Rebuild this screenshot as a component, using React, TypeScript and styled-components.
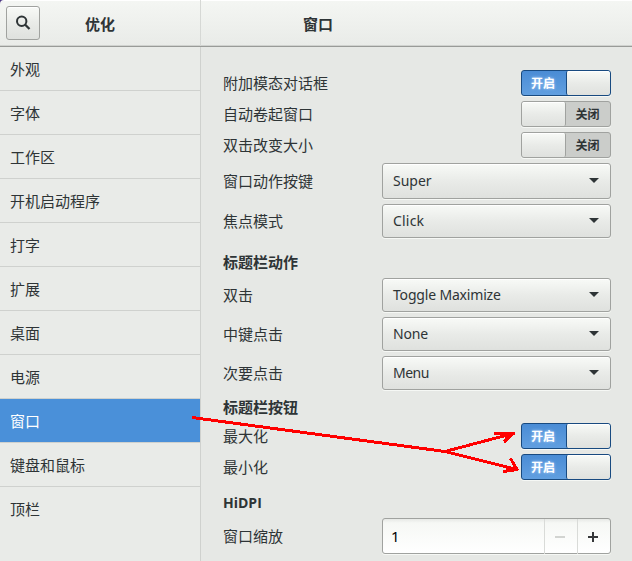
import React from 'react';
import styled, { createGlobalStyle, css } from 'styled-components';

const GlobalStyle = createGlobalStyle`
  * { box-sizing: border-box; }
  body {
    margin: 0;
    overflow: hidden;
    background: #e8eae7;
    color: #2e3436;
    font-family: "Noto Sans CJK SC", sans-serif;
    font-size: 15px;
  }
`;

const raised = css`
  background: linear-gradient(#f8faf7, #e9ebe8 50%, #dfe1de);
  box-shadow: inset 0 1px #fff;
`;

const Window = styled.div`
  position: relative;
  display: flex;
  flex-direction: column;
  width: 632px;
  height: 561px;
  overflow: hidden;
`;

const HeaderBar = styled.header`
  display: grid;
  grid-template-columns: 201px 1fr;
  height: 47px;
  flex: none;
  background: linear-gradient(#fff 1px, #f4f6f3 1px, #e9ebe8);
  border-bottom: 1px solid #999b98;
  box-shadow: inset 0 -1px #d0d2cf;
`;

const HeaderSide = styled.div`
  display: grid;
  grid-template-columns: 34px 1fr 34px;
  align-items: center;
  padding: 0 6px;
  border-right: 1px solid #d6d8d5;
`;

const HeaderMain = styled.div`
  display: flex;
  align-items: center;
  padding-left: 102px;
`;

const Title = styled.h1`
  margin: 0;
  padding-top: 2px;
  font-size: 15px;
  line-height: 24px;
  font-weight: 700;
  text-align: center;
`;

const SearchButton = styled.button`
  ${raised}
  display: grid;
  place-items: center;
  width: 34px;
  height: 34px;
  padding: 0;
  border: 1px solid #a0a29f;
  border-radius: 3px;
  color: #2e3436;
`;

const Corner = styled.svg`
  position: absolute;
  top: 0;
  left: 0;
`;

const Body = styled.div`
  display: grid;
  grid-template-columns: 201px 1fr;
  flex: 1;
`;

const Sidebar = styled.nav`
  background: #e9ebe8;
  border-right: 1px solid #cfd1ce;
`;

const NavItem = styled.div<{ $active: boolean; $last: boolean }>`
  display: flex;
  align-items: center;
  height: 44px;
  padding: 0 10px;
  border-bottom: 1px solid ${p => (p.$last ? 'transparent' : '#cfd1ce')};
  color: ${p => (p.$active ? '#fff' : '#2e3436')};
  background: ${p => (p.$active ? '#4a90d9' : 'transparent')};
  background-clip: padding-box;
`;

const Panel = styled.main`
  display: flex;
  flex-direction: column;
  gap: 5px;
  padding: 23px 21px 0 22px;
  background: #e6e8e5;
`;

const Row = styled.div<{ $height: number }>`
  display: flex;
  align-items: center;
  justify-content: space-between;
  height: ${p => p.$height}px;
  flex: none;
`;

const Label = styled.span`
  line-height: 22px;
  padding-bottom: 1px;
`;

const SectionTitle = styled.h2<{ $before: number; $latin?: boolean }>`
  flex: none;
  height: 20px;
  margin: ${p => p.$before}px 0 0;
  font-size: ${p => (p.$latin ? 14 : 15)}px;
  font-family: ${p => (p.$latin ? '"Open Sans"' : '"Noto Sans CJK SC"')}, sans-serif;
  line-height: ${p => (p.$latin ? 20 : 18)}px;
  font-weight: 700;
`;

const SwitchTrack = styled.div<{ $on: boolean }>`
  display: flex;
  flex-direction: ${p => (p.$on ? 'row' : 'row-reverse')};
  width: 90px;
  height: 26px;
  border: 1px solid ${p => (p.$on ? '#184a80' : '#a0a29f')};
  border-radius: 3px;
  overflow: hidden;
  background: ${p => (p.$on ? 'linear-gradient(#4a8cd5, #619fe0)' : '#cbcdca')};
  box-shadow: 0 1px #f6f8f5;
`;

const SwitchText = styled.span<{ $on: boolean }>`
  flex: 1;
  padding-right: ${p => (p.$on ? 2 : 1)}px;
  text-align: center;
  font-size: 12px;
  font-weight: 700;
  line-height: ${p => (p.$on ? 24 : 23)}px;
  color: ${p => (p.$on ? '#fff' : '#2e3436')};
  text-shadow: ${p => (p.$on ? '0 0 3px #b8d8ff' : 'none')};
`;

const SwitchThumb = styled.span<{ $on: boolean }>`
  ${raised}
  width: 44px;
  border-radius: 2px;
  ${p => (p.$on ? 'border-left: 1px solid #184a80;' : 'border-right: 1px solid #a0a29f;')}
`;

const SelectBox = styled.div`
  ${raised}
  display: flex;
  align-items: center;
  justify-content: space-between;
  width: 229px;
  height: 100%;
  padding: 0 11px 0 10px;
  border: 1px solid #a0a29f;
  border-radius: 3px;
  box-shadow: inset 0 1px #fff, 0 1px #f6f8f5;
  font-family: "Noto Sans", sans-serif;
  font-size: 14px;
`;

const SelectValue = styled.span<{ $spacing: number }>`
  padding-bottom: 2px;
  letter-spacing: ${p => p.$spacing}px;
`;

const SpinBox = styled.div`
  display: grid;
  grid-template-columns: 1fr 33px 33px;
  width: 229px;
  height: 36px;
  border: 1px solid #a0a29f;
  border-radius: 3px;
  background: linear-gradient(#e7e9e6, #f6f8f5 4px, #fff);
  box-shadow: 0 1px #f6f8f5;
`;

const SpinValue = styled.span`
  padding-left: 8px;
  font-family: "Noto Sans", sans-serif;
  font-size: 15px;
  line-height: 35px;
  color: #000;
`;

const SpinButton = styled.span<{ $disabled?: boolean }>`
  display: grid;
  place-items: center;
  padding-right: 2px;
  border-left: 1px solid #d9dbd8;
  color: ${p => (p.$disabled ? '#d2d4d1' : '#36383a')};
`;

const Annotation = styled.svg`
  position: absolute;
  inset: 0;
  pointer-events: none;
`;

const SearchIcon = () => (
  <svg width="16" height="16" viewBox="0 0 16 16" fill="none" stroke="currentColor">
    <circle cx="6.7" cy="6.2" r="4.7" strokeWidth="2" />
    <path d="M10 9.500L14.500 14" strokeWidth="2.3" />
  </svg>
);

const CaretIcon = () => (
  <svg width="10" height="8" viewBox="0 0 10 8">
    <path d="M0 1h10L5 6z" fill="#2e3436" />
  </svg>
);

const Toggle = ({ label, on }: { label: string; on: boolean }) => (
  <Row $height={26}>
    <Label>{label}</Label>
    <SwitchTrack $on={on}>
      <SwitchText $on={on}>{on ? '开启' : '关闭'}</SwitchText>
      <SwitchThumb $on={on} />
    </SwitchTrack>
  </Row>
);

const Choice = ({ label, value, height = 34, spacing = 0 }: { label: string; value: string; height?: number; spacing?: number }) => (
  <Row $height={height}>
    <Label>{label}</Label>
    <SelectBox>
      <SelectValue $spacing={spacing}>{value}</SelectValue>
      <CaretIcon />
    </SelectBox>
  </Row>
);

const sections = ['外观', '字体', '工作区', '开机启动程序', '打字', '扩展', '桌面', '电源', '窗口', '键盘和鼠标', '顶栏'];

export default function App() {
  return (
    <>
      <GlobalStyle />
      <Window>
        <HeaderBar>
          <HeaderSide>
            <SearchButton aria-label="搜索"><SearchIcon /></SearchButton>
            <Title>优化</Title>
          </HeaderSide>
          <HeaderMain><Title>窗口</Title></HeaderMain>
        </HeaderBar>
        <Body>
          <Sidebar>
            {sections.map((name, i) => (
              <NavItem key={name} $active={name === '窗口'} $last={i === sections.length - 1}>{name}</NavItem>
            ))}
          </Sidebar>
          <Panel>
            <Toggle label="附加模态对话框" on />
            <Toggle label="自动卷起窗口" on={false} />
            <Toggle label="双击改变大小" on={false} />
            <Choice label="窗口动作按键" value="Super" height={36} />
            <Choice label="焦点模式" value="Click" spacing={0.2} />
            <SectionTitle $before={10}>标题栏动作</SectionTitle>
            <Choice label="双击" value="Toggle Maximize" spacing={-0.18} />
            <Choice label="中键点击" value="None" spacing={-0.2} />
            <Choice label="次要点击" value="Menu" spacing={-0.5} />
            <SectionTitle $before={3}>标题栏按钮</SectionTitle>
            <Toggle label="最大化" on />
            <Toggle label="最小化" on />
            <SectionTitle $before={8} $latin>HiDPI</SectionTitle>
            <Row $height={36}>
              <Label>窗口缩放</Label>
              <SpinBox>
                <SpinValue>1</SpinValue>
                <SpinButton $disabled>
                  <svg width="10" height="10" viewBox="0 0 10 10"><path d="M0 4h10v2H0z" fill="currentColor" /></svg>
                </SpinButton>
                <SpinButton>
                  <svg width="10" height="10" viewBox="0 0 10 10"><path d="M0 4h4V0h2v4h4v2H6v4H4V6H0z" fill="currentColor" /></svg>
                </SpinButton>
              </SpinBox>
            </Row>
          </Panel>
        </Body>
        <Corner width="4" height="4" viewBox="0 0 4 4"><path d="M0 0h4Q0 0 0 4z" fill="#4a3580" /></Corner>
        <Annotation width="632" height="561" viewBox="0 0 632 561" fill="none" stroke="#f00" strokeWidth="3" shapeRendering="crispEdges">
          <path d="M192 417.500L445 451.500L513 433.500M494 433.500H515M513 433.500L504 442M500 435L508 434M505 438L512 434M445 451.500L517 469.500M510.500 458.500L517 469.500L503 471.500M506 468L516 469" strokeLinejoin="round" />
        </Annotation>
      </Window>
    </>
  );
}
